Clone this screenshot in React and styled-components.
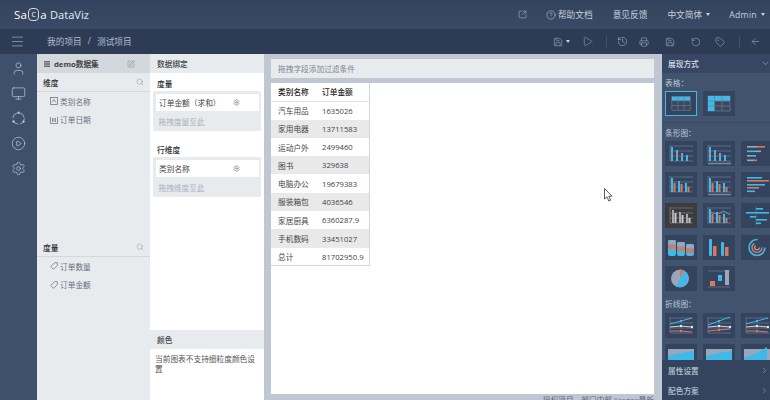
import React from "react";
import styled, { createGlobalStyle } from "styled-components";
import {
  ArrowLeft,
  ChevronDown,
  ChevronRight,
  CircleHelp,
  CirclePlay,
  History,
  Menu,
  Monitor,
  Play,
  Printer,
  RotateCcw,
  Save,
  Search,
  Settings,
  SquarePen,
  SquareArrowOutUpRight,
  Tag,
  User,
} from "lucide-react";

const CYAN = "#3db9ea";
const ORANGE = "#d8795c";
const GREY = "#9aa7ba";

const GlobalStyle = createGlobalStyle`
  html, body {
    margin: 0;
    height: 400px;
    overflow: hidden;
    font-family: "Open Sans", "Noto Sans CJK SC", sans-serif;
    font-size: 7.7px;
    color: #444;
  }
`;

const Root = styled.div`
  width: 770px;
  height: 400px;
  display: flex;
  flex-direction: column;
  overflow: hidden;
`;

const TopBar = styled.header`
  height: 29px;
  flex: none;
  display: flex;
  align-items: center;
  padding: 0 5px 0 14px;
  background: linear-gradient(#34435d, #3a4a66);
  color: #c5d0de;
  font-size: 8.7px;
`;

const Logo = styled.div`
  color: #fff;
  font-size: 11.5px;
  font-family: "Open Sans", sans-serif;
  display: flex;
  align-items: center;
  letter-spacing: 0.3px;
`;

const LogoRing = styled.span`
  width: 9px;
  height: 11px;
  border: 1px solid #cfd8e4;
  border-radius: 4px;
  font-size: 7px;
  line-height: 11px;
  text-align: center;
  margin: 0 1px;
`;

const LogoName = styled.span`
  margin-left: 3px;
  color: #dbe2ec;
  font-family: "Noto Sans", sans-serif;
  font-size: 11px;
  letter-spacing: 0;
`;

const TopNav = styled.nav`
  margin-left: auto;
  display: flex;
  align-items: center;
`;

const TopItem = styled.span`
  display: flex;
  align-items: center;
  gap: ${(p) => p.$gap ?? 2}px;
  margin-left: ${(p) => p.$left ?? 0}px;
  letter-spacing: ${(p) => p.$spacing ?? 0}px;
`;

const Caret = styled.i`
  width: 0;
  height: 0;
  margin-left: ${(p) => p.$left ?? 4}px;
  border-left: 2.5px solid transparent;
  border-right: 2.5px solid transparent;
  border-top: 3px solid #c5d0de;
`;

const ToolBar = styled.div`
  height: 25px;
  flex: none;
  display: flex;
  align-items: center;
  padding-left: 10px;
  background: #2e3b55;
  color: #b0bccd;
  font-size: 8.7px;
`;

const Crumbs = styled.div`
  margin-left: 22px;
  display: flex;
  gap: 6px;
`;

const Tools = styled.div`
  margin-left: auto;
  padding-right: 9px;
  display: flex;
  align-items: center;
`;

const ToolIcon = styled.span`
  display: flex;
  align-items: center;
  margin-left: ${(p) => p.$left}px;
`;

const ToolDivider = styled.i`
  width: 1px;
  height: 12px;
  background: #43516b;
  margin-left: ${(p) => p.$left}px;
`;

const Body = styled.div`
  flex: 1;
  min-height: 0;
  display: flex;
`;

const SideNav = styled.aside`
  width: 37px;
  flex: none;
  box-sizing: border-box;
  background: #3f506c;
  display: flex;
  flex-direction: column;
  align-items: center;
  padding-top: 6.5px;
  gap: 10px;
  color: #adc3da;
`;

const DataPanel = styled.section`
  width: 113px;
  flex: none;
  background: #e8ebee;
  display: flex;
  flex-direction: column;
`;

const PanelHead = styled.div`
  height: 19px;
  flex: none;
  display: flex;
  align-items: center;
  padding: 0 7px;
  background: ${(p) => p.$bg};
  font-weight: ${(p) => (p.$bold ? 700 : 500)};
  gap: 4px;
`;

const PushRight = styled.span`
  margin-left: auto;
  margin-right: ${(p) => p.$right ?? 0}px;
  display: flex;
  color: #667;
`;

const SectionHead = styled.div`
  height: 18px;
  flex: none;
  display: flex;
  align-items: center;
  padding: 0 6px 0 6px;
  margin-top: ${(p) => p.$top ?? 0}px;
  border-bottom: 1px solid #d3d8dd;
  font-weight: 500;
  color: #333;
`;

const FieldRow = styled.div`
  height: 18.5px;
  display: flex;
  align-items: center;
  gap: 2px;
  padding-left: 13px;
  color: #667080;
`;

const BindPanel = styled.section`
  width: 114px;
  flex: none;
  background: #fff;
  display: flex;
  flex-direction: column;
`;

const BindTitle = styled.div`
  padding: 5px 0 0 7px;
  height: 18px;
  box-sizing: border-box;
  margin-top: ${(p) => p.$top ?? 0}px;
  font-weight: 500;
  color: #333;
`;

const DropZone = styled.div`
  margin: 0 3px;
  padding: 2.5px 2.5px 0;
  height: 40px;
  box-sizing: border-box;
  background: #e8ebee;
  border-radius: 2px;
`;

const Chip = styled.div`
  height: 17.5px;
  display: flex;
  align-items: center;
  justify-content: space-between;
  padding: 0 19px 0 3.5px;
  background: #fff;
`;

const DropHint = styled.div`
  margin: 5px 0 0 3px;
  color: #aab2bc;
`;

const ColorBlock = styled.div`
  margin-top: auto;
  height: 70px;
  flex: none;
`;

const ColorText = styled.p`
  margin: 5px 4px 0 5px;
  line-height: 10px;
  color: #555;
`;

const Main = styled.main`
  width: 398px;
  flex: none;
  box-sizing: border-box;
  padding: 5px 8px 0 7px;
  background: #bfc8d2;
  display: flex;
  flex-direction: column;
`;

const FilterBar = styled.div`
  height: 19px;
  flex: none;
  display: flex;
  align-items: center;
  padding-left: 7px;
  background: #e8ebee;
  color: #7d8794;
`;

const Canvas = styled.div`
  position: relative;
  margin-top: 5px;
  height: 311px;
  flex: none;
  background: #fff;
`;

const DataTable = styled.table`
  border-collapse: collapse;
  table-layout: fixed;
  width: 99px;
  height: 183px;
  border-right: 1px solid #cfd5db;
  border-bottom: 1px solid #cfd5db;
  color: #444;
`;

const HeadCell = styled.th`
  text-align: left;
  font-weight: 500;
  padding: 0 0 0 7px;
  width: ${(p) => p.$width ?? "auto"};
  color: #222;
  border-bottom: 1px solid #dfe3e7;
`;

const Cell = styled.td`
  padding: 0 0 0 7px;
  white-space: nowrap;
`;

const Row = styled.tr`
  height: 18.3px;
  background: ${(p) => (p.$odd ? "#e9e9e9" : "#fff")};
`;

const Pointer = styled.svg`
  position: absolute;
  left: 333px;
  top: 105px;
`;

const License = styled.div`
  text-align: right;
  line-height: 10px;
  margin-top: 1px;
  color: #667;
`;

const StylePanel = styled.aside`
  flex: 1;
  min-width: 0;
  background: #42536e;
  display: flex;
  flex-direction: column;
  overflow: hidden;
  color: #b9c6d6;
`;

const StyleHead = styled.div`
  height: 19px;
  flex: none;
  display: flex;
  align-items: center;
  justify-content: space-between;
  padding: 0 0 0 6px;
  background: #374763;
  color: #d5dde8;
  font-weight: 500;
`;

const StyleScroll = styled.div`
  flex: 1;
  min-height: 0;
  overflow: hidden;
`;

const GroupLabel = styled.div`
  height: 18px;
  padding-left: 3px;
  margin-top: ${(p) => p.$top ?? 0}px;
  display: flex;
  align-items: center;
`;

const ThumbGrid = styled.div`
  display: grid;
  grid-template-columns: repeat(3, 32px);
  grid-auto-rows: 25px;
  column-gap: 6px;
  row-gap: 6.2px;
  padding-left: 3px;
`;

const Thumb = styled.div`
  box-sizing: border-box;
  background: ${(p) => (p.$dark ? "#3c3c3f" : "#35445e")};
  border: ${(p) => (p.$active ? `1.5px solid ${CYAN}` : "none")};
  display: flex;
`;

const GroupRule = styled.div`
  height: 1px;
  margin-top: 6px;
  background: #384862;
`;

const FoldRow = styled.div`
  height: 20px;
  flex: none;
  box-sizing: border-box;
  display: flex;
  align-items: center;
  justify-content: space-between;
  padding: 0 1px 0 6px;
  background: #34435e;
  color: #b9c6d6;
  font-weight: 500;
`;

const TABLE_ROWS = [
  ["汽车用品", "1635026"],
  ["家用电器", "13711583"],
  ["运动户外", "2499460"],
  ["图书", "329638"],
  ["电脑办公", "19679383"],
  ["服装箱包", "4036546"],
  ["家居厨具", "6360287.9"],
  ["手机数码", "33451027"],
  ["总计", "81702950.9"],
];

function Art({ children }) {
  return (
    <svg width="100%" height="100%" viewBox="0 0 32 25">
      {children}
    </svg>
  );
}

function Axes({ color = "#77859b", bottom }) {
  return (
    <g stroke={color} strokeWidth=".6" fill="none">
      <path d="M5 5h23M5 10h23M5 15h23M5 20h23M5 4v16" />
      {bottom && <path d="M5 22.5h23" strokeWidth="1.6" />}
    </g>
  );
}

// vertical bars: [x, top, color] drawn down to the axis
function VBars({ bars, width = 2, base = 20 }) {
  return bars.map(([x, y, c]) => (
    <rect key={x} x={x} y={y} width={width} height={base - y} fill={c} />
  ));
}

function HBars({ bars }) {
  return bars.map(([y, x, w, c], i) => (
    <rect key={i} x={x} y={y} width={w} height="1.6" fill={c} />
  ));
}

const stacked = [
  [6, 6, CYAN],
  [11, 9, CYAN],
  [16, 12, CYAN],
  [21, 14, CYAN],
];
const grouped = [
  [6, 6, CYAN],
  [8.5, 11, ORANGE],
  [13, 9, CYAN],
  [15.5, 12, ORANGE],
  [20, 11, CYAN],
  [22.5, 15, ORANGE],
];

function LineArt({ shift = 0 }) {
  const line = (d, c) => <path d={d} fill="none" stroke={c} strokeWidth="1" />;
  return (
    <Art>
      <Axes />
      {line(`M5 ${11 + shift}L16 8L27 ${5 - shift}`, CYAN)}
      {line("M5 14L16 13L27 14", "#cfd6e0")}
      {line(`M5 18L16 ${18 - shift}L27 ${19 - shift * 3}`, ORANGE)}
      <circle cx="16" cy="8" r="1.2" fill={CYAN} />
      <circle cx="16" cy="13" r="1.2" fill="#e4e8ee" />
      <circle cx="16" cy={18 - shift} r="1.2" fill={ORANGE} />
      <circle cx="27" cy="14" r="1.2" fill="#e4e8ee" />
    </Art>
  );
}

function AreaArt({ tall }) {
  return (
    <Art>
      <path d="M3 5h26v17H3z" fill="#9aa7ba" />
      <path d={tall ? "M3 14L14 10L26 3V18H3z" : "M3 12L16 9L29 7V18H3z"} fill={CYAN} />
      <path d="M3 17h26v5H3z" fill={ORANGE} />
    </Art>
  );
}

const THUMBS_TABLE = [
  <Art key="a">
    <path d="M6 5h20v15H6z" fill="#3a4862" stroke="#6f7c91" strokeWidth=".7" />
    <path d="M6 5h20v4.5H6z" fill={CYAN} />
    <path d="M12.7 5v15M19.3 5v15M6 9.5h20M6 14.7h20" stroke="#6f7c91" strokeWidth=".7" />
  </Art>,
  <Art key="b">
    <path d="M5 5h22v15H5z" fill="#3a4862" stroke="#6f7c91" strokeWidth=".7" />
    <path d="M5 5h22v5H5zM5 10h6.5v10H5z" fill={CYAN} />
    <path d="M11.5 5v15M19 5v15M5 10h22M5 15h22" stroke="#6f7c91" strokeWidth=".7" />
  </Art>,
];

const THUMBS_BAR = [
  <Art key="1">
    <Axes />
    <VBars bars={stacked} />
    <path d="M6 13h2M11 14h2M16 15h2" stroke={ORANGE} strokeWidth="2" />
  </Art>,
  <Art key="2">
    <Axes bottom />
    <VBars bars={stacked} />
    <path d="M6 13h2M11 14h2M16 15h2" stroke={ORANGE} strokeWidth="2" />
  </Art>,
  <Art key="3">
    <HBars
      bars={[
        [5, 6, 10, GREY],
        [5, 16, 8, ORANGE],
        [9.5, 6, 8, CYAN],
        [9.5, 14, 6, GREY],
        [14, 6, 5, GREY],
        [14, 11, 4, CYAN],
        [18.5, 6, 7, GREY],
        [18.5, 13, 3, ORANGE],
      ]}
    />
  </Art>,
  <Art key="4">
    <Axes />
    <VBars bars={grouped} />
  </Art>,
  <Art key="5">
    <Axes bottom />
    <VBars bars={grouped} />
  </Art>,
  <Art key="6">
    <HBars
      bars={[
        [5, 6, 15, CYAN],
        [8, 6, 22, ORANGE],
        [12, 6, 18, CYAN],
        [15, 6, 12, ORANGE],
        [18.5, 6, 8, CYAN],
      ]}
    />
  </Art>,
  <Art key="7">
    <Axes color="#8a8a8a" />
    <VBars
      bars={[
        [7, 7, "#a9a9a9"],
        [9.5, 10, "#c9c9c9"],
        [14, 9, "#a9a9a9"],
        [16.5, 12, "#c9c9c9"],
        [21, 11, "#a9a9a9"],
        [23.5, 15, "#c9c9c9"],
      ]}
    />
  </Art>,
  <Art key="8">
    <Axes />
    <VBars bars={grouped} />
    <path d="M7 9L14 11L21 8L27 12" fill="none" stroke={GREY} strokeWidth=".7" />
  </Art>,
  <Art key="9">
    <path d="M15 3v19" stroke="#6f7c91" strokeWidth=".5" />
    <HBars
      bars={[
        [5, 15, 7, CYAN],
        [9, 5, 10, CYAN],
        [9, 15, 13, CYAN],
        [13, 9, 6, CYAN],
        [16, 15, 11, CYAN],
        [19.5, 15, 5, CYAN],
      ]}
    />
  </Art>,
  <Art key="10">
    {[[3, 5], [12, 7], [21, 9]].map(([x, y]) => (
      <g key={x}>
        <rect x={x} y={y} width="8" height={21 - y} rx="2" fill={CYAN} />
        <rect x={x} y={y + 5} width="8" height="4" fill={ORANGE} />
        <rect x={x} y={y} width="8" height="4" rx="2" fill={GREY} />
      </g>
    ))}
  </Art>,
  <Art key="11">
    <rect x="6" y="4" width="3" height="17" rx="1" fill={CYAN} />
    <rect x="10" y="11" width="3.5" height="10" fill={ORANGE} />
    <rect x="18" y="7" width="3" height="14" rx="1" fill={CYAN} />
    <rect x="22" y="12" width="3.5" height="9" fill={ORANGE} />
  </Art>,
  <Art key="12">
    <g fill="none">
      <circle cx="16" cy="12.5" r="8" stroke={CYAN} strokeWidth="1.6" strokeDasharray="38 12" />
      <circle cx="16" cy="12.5" r="5" stroke={ORANGE} strokeWidth="1.6" strokeDasharray="20 12" />
      <circle cx="16" cy="12.5" r="2.4" stroke={GREY} strokeWidth="1.2" strokeDasharray="9 6" />
    </g>
  </Art>,
  <Art key="13">
    <circle cx="15" cy="12.5" r="9" fill={GREY} />
    <path d="M15 12.5L19 4.5A9 9 0 0 1 11 20.5z" fill={CYAN} />
    <path d="M15 12.5V3.5A9 9 0 0 1 19 4.5z" fill={ORANGE} />
  </Art>,
  <Art key="14">
    <path d="M5 5h22M5 21h22" stroke="#6f7c91" strokeWidth=".7" />
    <rect x="7" y="15" width="5" height="5" fill={ORANGE} />
    <rect x="15" y="9" width="4" height="6" fill={CYAN} />
    <rect x="22" y="4" width="4" height="15" fill={GREY} />
  </Art>,
];

const THUMBS_LINE = [
  <LineArt key="l1" />,
  <LineArt key="l2" shift={1} />,
  <LineArt key="l3" />,
  <AreaArt key="a1" />,
  <AreaArt key="a2" />,
  <AreaArt key="a3" tall />,
];

function TextFieldIcon() {
  return (
    <svg width="8" height="8" viewBox="0 0 8 8" fill="none" stroke="#778">
      <rect x=".5" y=".5" width="7" height="7" strokeWidth=".8" />
      <path d="M2 5.5L4 2.5L6 5.5" strokeWidth=".8" />
    </svg>
  );
}

function DateFieldIcon() {
  return (
    <svg width="8" height="8" viewBox="0 0 8 8" fill="none" stroke="#778">
      <path d="M.5 1v6.5h7V1M2.5 2v4M4 2v4M5.5 2v4" strokeWidth=".8" />
    </svg>
  );
}

function MeasureIcon() {
  return (
    <svg width="8" height="8" viewBox="0 0 8 8" fill="none" stroke="#778">
      <path d="M4.5.7h2.8v2.8L3.5 7.3L.7 4.5z" strokeWidth=".8" />
    </svg>
  );
}

function DashedCircle() {
  return (
    <svg width="15" height="15" viewBox="0 0 15 15" fill="none" stroke="currentColor" strokeWidth="1">
      <circle cx="7.5" cy="7.5" r="5.7" strokeDasharray="7 2" opacity=".8" />
      <circle cx="7.5" cy="1.8" r=".8" fill="currentColor" />
      <circle cx="2.5" cy="10.5" r=".8" fill="currentColor" />
      <circle cx="12.5" cy="10.5" r=".8" fill="currentColor" />
    </svg>
  );
}

function DataList({ items, icon }) {
  return items.map((name) => (
    <FieldRow key={name}>
      {icon}
      {name}
    </FieldRow>
  ));
}

export default function App() {
  return (
    <Root>
      <GlobalStyle />
      <TopBar>
        <Logo>
          Sa<LogoRing>C</LogoRing>a<LogoName>DataViz</LogoName>
        </Logo>
        <TopNav>
          <SquareArrowOutUpRight size={9} strokeWidth={1.3} />
          <TopItem $left={19}>
            <CircleHelp size={10} strokeWidth={1.3} />
            帮助文档
          </TopItem>
          <TopItem $left={20}>意见反馈</TopItem>
          <TopItem $left={20} $gap={0}>
            中文简体
            <Caret />
          </TopItem>
          <TopItem $left={19} $gap={0} $spacing={0.3}>
            Admin
            <Caret />
          </TopItem>
        </TopNav>
      </TopBar>
      <ToolBar>
        <Menu size={15} strokeWidth={1} />
        <Crumbs>
          <span>我的项目</span>
          <span>/</span>
          <span>测试项目</span>
        </Crumbs>
        <Tools>
          <Save size={10} strokeWidth={1.2} />
          <Caret $left={3} />
          <ToolIcon $left={12}>
            <Play size={11} strokeWidth={1} />
          </ToolIcon>
          <ToolDivider $left={13} />
          <ToolIcon $left={10}>
            <History size={11} strokeWidth={1.2} />
          </ToolIcon>
          <ToolIcon $left={11}>
            <Printer size={10} strokeWidth={1.2} />
          </ToolIcon>
          <ToolIcon $left={16}>
            <Save size={10} strokeWidth={1.2} />
          </ToolIcon>
          <ToolIcon $left={16}>
            <RotateCcw size={10} strokeWidth={1.2} />
          </ToolIcon>
          <ToolIcon $left={14}>
            <Tag size={10} strokeWidth={1.2} />
          </ToolIcon>
          <ToolDivider $left={14} />
          <ToolIcon $left={10}>
            <ArrowLeft size={11} strokeWidth={1.1} />
          </ToolIcon>
        </Tools>
      </ToolBar>
      <Body>
        <SideNav>
          <User size={15} strokeWidth={1.2} />
          <Monitor size={15} strokeWidth={1.2} />
          <DashedCircle />
          <CirclePlay size={15} strokeWidth={1.2} />
          <Settings size={15} strokeWidth={1.2} />
        </SideNav>
        <DataPanel>
          <PanelHead $bg="#d3d8dd" $bold>
            <svg width="6" height="6" viewBox="0 0 6 6" fill="#667">
              <path d="M0 0h6v1.5H0zM0 2.3h6v1.5H0zM0 4.5h6V6H0z" />
            </svg>
            demo数据集
            <PushRight $right={8}>
              <SquarePen size={8} strokeWidth={1.2} />
            </PushRight>
          </PanelHead>
          <SectionHead>
            维度
            <PushRight>
              <Search size={8} strokeWidth={1} />
            </PushRight>
          </SectionHead>
          <DataList items={["类别名称"]} icon={<TextFieldIcon />} />
          <DataList items={["订单日期"]} icon={<DateFieldIcon />} />
          <SectionHead $top={109}>
            度量
            <PushRight>
              <Search size={8} strokeWidth={1} />
            </PushRight>
          </SectionHead>
          <DataList items={["订单数量", "订单金额"]} icon={<MeasureIcon />} />
        </DataPanel>
        <BindPanel>
          <PanelHead $bg="#e8ebee">数据绑定</PanelHead>
          <BindTitle>度量</BindTitle>
          <DropZone>
            <Chip>
              订单金额（求和）
              <Settings size={7} strokeWidth={1.3} />
            </Chip>
            <DropHint>拖拽度量至此</DropHint>
          </DropZone>
          <BindTitle $top={8}>行维度</BindTitle>
          <DropZone>
            <Chip>
              类别名称
              <Settings size={7} strokeWidth={1.3} />
            </Chip>
            <DropHint>拖拽维度至此</DropHint>
          </DropZone>
          <ColorBlock>
            <PanelHead $bg="#e8ebee">颜色</PanelHead>
            <ColorText>当前图表不支持细粒度颜色设置</ColorText>
          </ColorBlock>
        </BindPanel>
        <Main>
          <FilterBar>拖拽字段添加过滤条件</FilterBar>
          <Canvas>
            <DataTable>
              <thead>
                <Row>
                  <HeadCell $width="37px">类别名称</HeadCell>
                  <HeadCell>订单金额</HeadCell>
                </Row>
              </thead>
              <tbody>
                {TABLE_ROWS.map(([name, value], i) => (
                  <Row key={name} $odd={i % 2 === 1}>
                    <Cell>{name}</Cell>
                    <Cell>{value}</Cell>
                  </Row>
                ))}
              </tbody>
            </DataTable>
            <Pointer width="9" height="14" viewBox="0 0 9 14">
              <path d="M.5.5V11L3 8.8L4.8 13L6.6 12.2L4.8 8.2H8z" fill="#fff" stroke="#333" strokeWidth=".8" />
            </Pointer>
          </Canvas>
          <License>授权项目，部门内部 license最新</License>
        </Main>
        <StylePanel>
          <StyleHead>
            展现方式
            <ChevronDown size={9} strokeWidth={1.2} />
          </StyleHead>
          <StyleScroll>
            <GroupLabel>表格：</GroupLabel>
            <ThumbGrid>
              {THUMBS_TABLE.map((art, i) => (
                <Thumb key={i} $active={i === 0}>
                  {art}
                </Thumb>
              ))}
            </ThumbGrid>
            <GroupRule />
            <GroupLabel>条形图：</GroupLabel>
            <ThumbGrid>
              {THUMBS_BAR.map((art, i) => (
                <Thumb key={i} $dark={i === 6}>
                  {art}
                </Thumb>
              ))}
            </ThumbGrid>
            <GroupLabel $top={4}>折线图：</GroupLabel>
            <ThumbGrid>
              {THUMBS_LINE.map((art, i) => (
                <Thumb key={i}>{art}</Thumb>
              ))}
            </ThumbGrid>
          </StyleScroll>
          <FoldRow>
            属性设置
            <ChevronRight size={9} strokeWidth={1.2} />
          </FoldRow>
          <FoldRow>
            配色方案
            <ChevronRight size={9} strokeWidth={1.2} />
          </FoldRow>
        </StylePanel>
      </Body>
    </Root>
  );
}
